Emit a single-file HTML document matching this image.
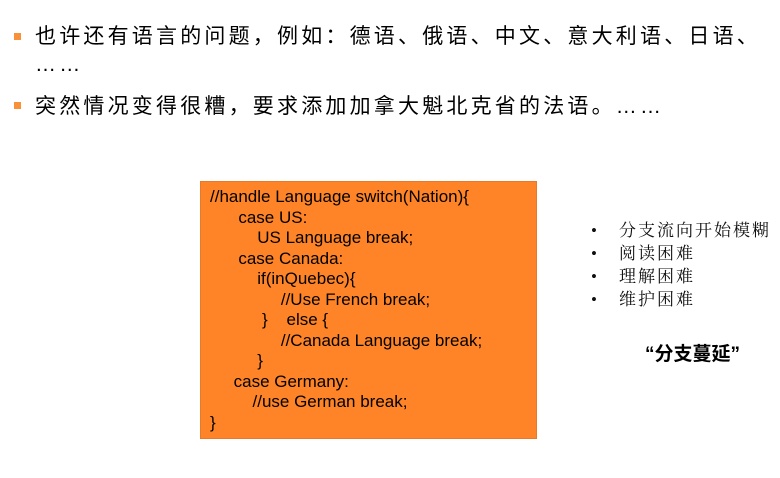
<!DOCTYPE html>
<html><head><meta charset="utf-8"><style>
body{margin:0;width:780px;height:478px;background:#fff;position:relative;overflow:hidden;font-family:"Liberation Sans","Noto Sans CJK SC",sans-serif;color:#000}
.t{position:absolute;white-space:nowrap}
.top{font-size:21px;letter-spacing:3.2px;left:35px;line-height:24px;font-family:"Liberation Sans","Noto Sans CJK SC",sans-serif}
.sq{position:absolute;width:7px;height:7px;background:#f7923a}
.box{position:absolute;left:200px;top:181px;width:335px;height:256px;background:#ff8427;border:1px solid #e8782a}
.code{position:absolute;left:9px;top:5px;font-size:17px;line-height:20.5px;white-space:pre;font-family:"Liberation Sans",sans-serif;letter-spacing:0px}
.r{font-family:"Liberation Serif","Noto Serif CJK SC",serif;font-size:17px;letter-spacing:2px;line-height:23px;left:591px;top:219px;color:#111}
.r span{display:inline-block;width:28px;letter-spacing:0}
</style></head><body>
<div class="sq" style="left:14px;top:33px"></div>
<div class="t top" style="top:25px">也许还有语言的问题，例如：德语、俄语、中文、意大利语、日语、</div>
<div class="t top" style="top:53px">……</div>
<div class="sq" style="left:14px;top:102px"></div>
<div class="t top" style="top:95px">突然情况变得很糟，要求添加加拿大魁北克省的法语。……</div>
<div class="box"><div class="code">//handle Language switch(Nation){
      case US:
          US Language break;
      case Canada:
          if(inQuebec){
               //Use French break;
           }    else {
               //Canada Language break;
          }
     case Germany:
         //use German break;
}</div></div>
<div class="t r"><span>•</span>分支流向开始模糊<br><span>•</span>阅读困难<br><span>•</span>理解困难<br><span>•</span>维护困难</div>
<div class="t" style="left:645px;top:339px;font-size:19px;font-weight:bold">“分支蔓延”</div>
</body></html>
